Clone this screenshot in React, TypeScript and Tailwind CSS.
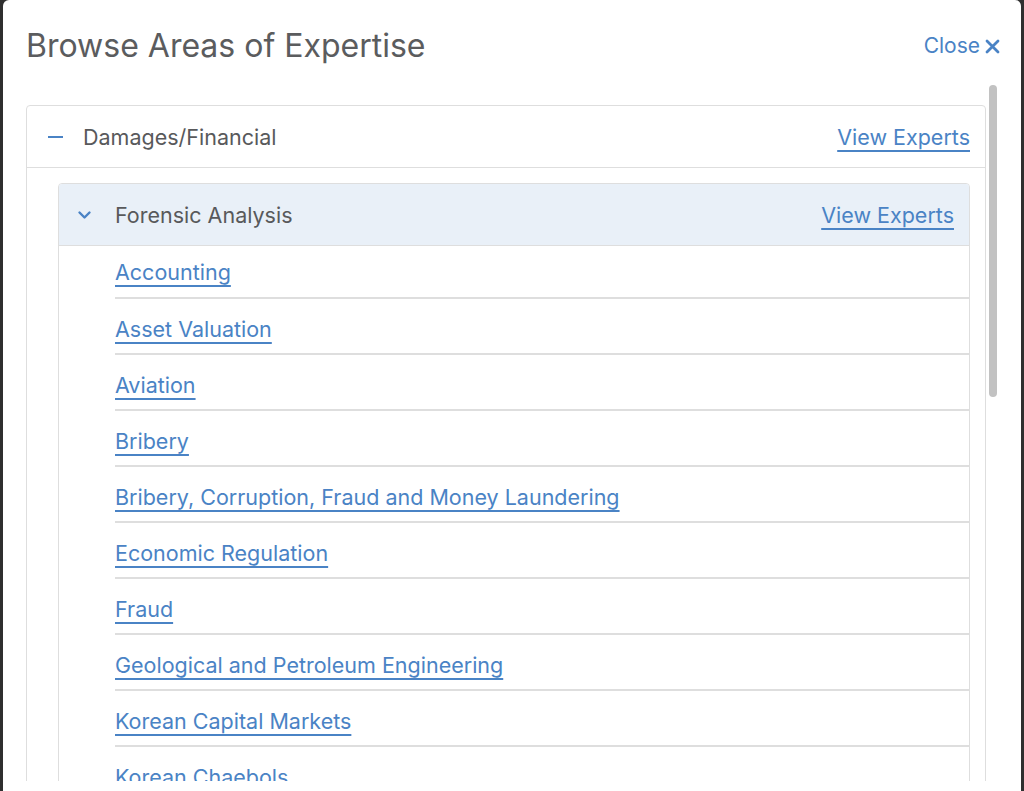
const items = [
  'Accounting',
  'Asset Valuation',
  'Aviation',
  'Bribery',
  'Bribery, Corruption, Fraud and Money Laundering',
  'Economic Regulation',
  'Fraud',
  'Geological and Petroleum Engineering',
  'Korean Capital Markets',
  'Korean Chaebols',
];

export default function App() {
  return (
    <div className="h-screen w-full overflow-hidden bg-[#2f2f2f] px-[3px] font-['Inter',sans-serif]">
      <div className="flex h-full flex-col rounded-t-[6px] bg-white pb-[10px]">
        {/* modal header */}
        <div className="flex h-[85px] shrink-0 items-start justify-between pl-[23px] pr-[21px] pt-[27px]">
          <h2 className="text-[32px] leading-[38px] font-normal text-[#5b5c5e]">Browse Areas of Expertise</h2>
          <button className="mt-[7px] flex items-center gap-[5px] text-[21px] leading-[24px] text-[#4a83c5]">
            Close
            <svg width="15" height="15" viewBox="0 0 15 15" fill="none" stroke="#4a83c5" strokeWidth="2.8" strokeLinecap="round">
              <path d="M2 2l11 11M13 2L2 13" />
            </svg>
          </button>
        </div>

        {/* scrollable body */}
        <div className="flex min-h-0 flex-1 pl-[23px] pr-[21px]">
          <div className="w-[960px] overflow-hidden pt-[20px]">
            <div className="rounded-[4px] border border-[#dedede]">
              <div className="flex h-[62px] items-center justify-between border-b border-[#dedede] pl-[21px] pr-[15px]">
                <div className="flex items-center gap-[20px]">
                  <span className="h-[2px] w-[15px] bg-[#4a83c5]" />
                  <span className="text-[21.5px] leading-[26px] text-[#58595b]">Damages/Financial</span>
                </div>
                <a className="text-[21.5px] leading-[26px] text-[#4a83c5] underline decoration-[1.5px] underline-offset-[5px]">
                  View Experts
                </a>
              </div>

              <div className="pl-[31px] pr-[15px] pt-[15px]">
                <div className="overflow-hidden rounded-[4px] border border-[#dedede]">
                  <div className="flex h-[62px] items-center justify-between border-b border-[#dedede] bg-[#e9f0f8] pl-[18px] pr-[15px]">
                    <div className="flex items-center gap-[23px]">
                      <svg width="15" height="15" viewBox="0 0 15 15" fill="none" stroke="#4a83c5" strokeWidth="2.4" strokeLinecap="round" strokeLinejoin="round">
                        <path d="M2.5 5.5l5 5 5-5" />
                      </svg>
                      <span className="text-[21.5px] leading-[26px] text-[#58595b]">Forensic Analysis</span>
                    </div>
                    <a className="text-[21.5px] leading-[26px] text-[#4a83c5] underline decoration-[1.5px] underline-offset-[5px]">
                      View Experts
                    </a>
                  </div>

                  <ul className="pl-[56px] text-[21.5px] leading-[26px]">
                    {items.map((item, i) => (
                      <li
                        key={item}
                        className={
                          i === 0
                            ? 'h-[53px] border-b-2 border-[#dedede] pt-[13px]'
                            : 'h-[56px] border-b-2 border-[#dedede] pt-[17px]'
                        }
                      >
                        <a className="text-[#4a83c5] underline decoration-[1.5px] underline-offset-[5px]">
                          {item}
                        </a>
                      </li>
                    ))}
                  </ul>
                </div>
              </div>
            </div>
          </div>

          {/* scrollbar */}
          <div className="w-[14px] shrink-0 pl-[3px]">
            <div className="h-[312px] w-[8px] rounded-full bg-[#c2c2c2]" />
          </div>
        </div>
      </div>
    </div>
  );
}
